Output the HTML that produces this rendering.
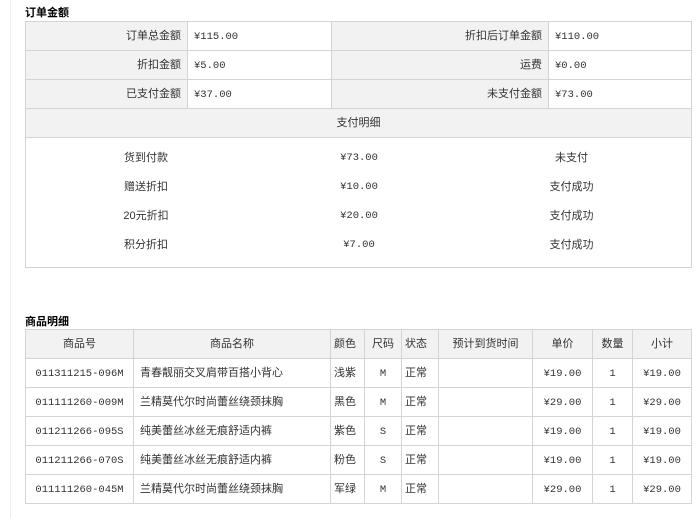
<!DOCTYPE html>
<html><head><style>
body{margin:0;background:#fff;font-family:"Liberation Sans","Noto Sans CJK SC",sans-serif;font-size:11px;color:#333;width:700px;height:518px;overflow:hidden;position:relative}
.t{position:absolute;left:25px;font-weight:bold;font-size:11px;color:#000}
table{position:absolute;left:25px;border-collapse:collapse;table-layout:fixed;font-size:11px}
td{border:1px solid #d4d4d4;height:29px;padding:0 6px;white-space:nowrap;font-size:11px;line-height:14px;box-sizing:border-box;overflow:hidden}
.n{font-family:"Liberation Mono","Noto Sans CJK SC",monospace;font-size:10.5px;padding-top:1px}
.g{background:#f2f2f2}
.r{text-align:right}.c{text-align:center}
.in td{border:none;height:29px;text-align:center}
</style></head><body>
<div style="position:absolute;left:10px;top:0;width:1px;height:518px;background:#eee"></div>
<div class="t" style="top:4px">订单金额</div>
<table style="top:21px;width:666px">
<col style="width:162px"><col style="width:144px"><col style="width:217px"><col style="width:143px">
<tr><td class="g r">订单总金额</td><td class="n">¥115.00</td><td class="g r">折扣后订单金额</td><td class="n">¥110.00</td></tr>
<tr><td class="g r">折扣金额</td><td class="n">¥5.00</td><td class="g r">运费</td><td class="n">¥0.00</td></tr>
<tr><td class="g r">已支付金额</td><td class="n">¥37.00</td><td class="g r">未支付金额</td><td class="n">¥73.00</td></tr>
<tr><td class="g c" colspan="4">支付明细</td></tr>
<tr><td colspan="4" style="height:130px;padding:0;vertical-align:top">
<table class="in" style="position:static;width:100%;margin-top:5px"><col style="width:240px"><col style="width:186px"><col>
<tr><td>货到付款</td><td class="n">¥73.00</td><td>未支付</td></tr>
<tr><td>赠送折扣</td><td class="n">¥10.00</td><td>支付成功</td></tr>
<tr><td>20元折扣</td><td class="n">¥20.00</td><td>支付成功</td></tr>
<tr><td>积分折扣</td><td class="n">¥7.00</td><td>支付成功</td></tr>
</table></td></tr>
</table>
<div class="t" style="top:313px">商品明细</div>
<table style="top:329px;width:666px">
<col style="width:108px"><col style="width:197px"><col style="width:34px"><col style="width:37px"><col style="width:37px"><col style="width:94px"><col style="width:60px"><col style="width:40px"><col style="width:59px">
<tr class="g"><td class="c">商品号</td><td class="c">商品名称</td><td style="padding:0 3px">颜色</td><td style="padding:0 3px" class="c">尺码</td><td style="padding:0 3px">状态</td><td class="c">预计到货时间</td><td class="c">单价</td><td class="c">数量</td><td class="c">小计</td></tr>
<tr><td class="c n">011311215-096M</td><td>青春靓丽交叉肩带百搭小背心</td><td style="padding:0 3px">浅紫</td><td class="c n">M</td><td style="padding:0 3px">正常</td><td></td><td class="c n">¥19.00</td><td class="c n">1</td><td class="c n">¥19.00</td></tr>
<tr><td class="c n">011111260-009M</td><td>兰精莫代尔时尚蕾丝绕颈抹胸</td><td style="padding:0 3px">黑色</td><td class="c n">M</td><td style="padding:0 3px">正常</td><td></td><td class="c n">¥29.00</td><td class="c n">1</td><td class="c n">¥29.00</td></tr>
<tr><td class="c n">011211266-095S</td><td>纯美蕾丝冰丝无痕舒适内裤</td><td style="padding:0 3px">紫色</td><td class="c n">S</td><td style="padding:0 3px">正常</td><td></td><td class="c n">¥19.00</td><td class="c n">1</td><td class="c n">¥19.00</td></tr>
<tr><td class="c n">011211266-070S</td><td>纯美蕾丝冰丝无痕舒适内裤</td><td style="padding:0 3px">粉色</td><td class="c n">S</td><td style="padding:0 3px">正常</td><td></td><td class="c n">¥19.00</td><td class="c n">1</td><td class="c n">¥19.00</td></tr>
<tr><td class="c n">011111260-045M</td><td>兰精莫代尔时尚蕾丝绕颈抹胸</td><td style="padding:0 3px">军绿</td><td class="c n">M</td><td style="padding:0 3px">正常</td><td></td><td class="c n">¥29.00</td><td class="c n">1</td><td class="c n">¥29.00</td></tr>
</table>
</body></html>
